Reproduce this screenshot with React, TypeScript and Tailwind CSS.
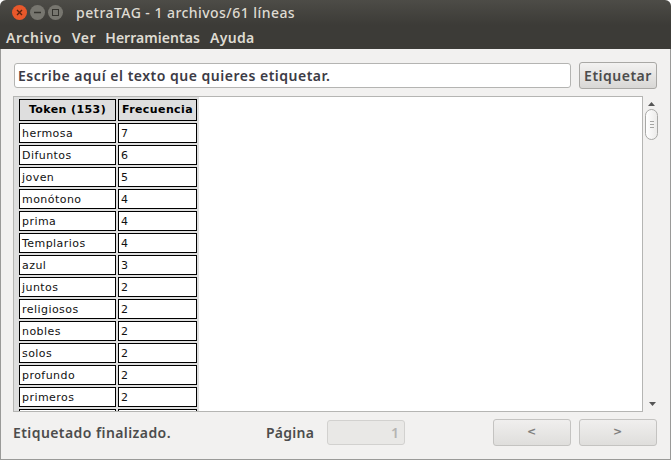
import React from 'react';

const rows: [string, string][] = [
  ['hermosa', '7'],
  ['Difuntos', '6'],
  ['joven', '5'],
  ['monótono', '4'],
  ['prima', '4'],
  ['Templarios', '4'],
  ['azul', '3'],
  ['juntos', '2'],
  ['religiosos', '2'],
  ['nobles', '2'],
  ['solos', '2'],
  ['profundo', '2'],
  ['primeros', '2'],
  ['', ''],
];

const ui = "font-['Noto_Sans','Open_Sans',sans-serif]";
const cell = "h-5 border border-black bg-white pl-[2px] text-[11px] leading-[19px] tracking-[0.45px] text-[#111] font-['DejaVu_Sans',sans-serif]";
const head = "h-[22px] border border-black bg-[#dedede] text-center text-[11px] leading-[19px] font-bold tracking-[0.4px] text-black font-['DejaVu_Sans',sans-serif]";

export default function App() {
  return (
    <div className={`flex h-[460px] w-[671px] flex-col overflow-hidden rounded-t-md bg-[#f2f1f0] ${ui}`}>
      {/* title bar */}
      <div className="flex h-[25px] items-center bg-gradient-to-b from-[#4d4c47] to-[#3c3b37] pl-3 text-[#dfdbd2]">
        <div className="flex items-center gap-[3px]">
          <div className="flex size-[15px] items-center justify-center rounded-full bg-[#e8582b] text-[#5a2410]">
            <svg width="7" height="7" viewBox="0 0 7 7" stroke="currentColor" strokeWidth="1.4"><path d="M1 1l5 5M6 1l-5 5" /></svg>
          </div>
          <div className="flex size-[15px] items-center justify-center rounded-full bg-[#77766f] text-[#35342f]">
            <svg width="7" height="7" viewBox="0 0 7 7" stroke="currentColor" strokeWidth="1.4"><path d="M0 3.5h7" /></svg>
          </div>
          <div className="flex size-[15px] items-center justify-center rounded-full bg-[#77766f] text-[#35342f]">
            <svg width="7" height="7" viewBox="0 0 7 7" fill="none" stroke="currentColor"><rect x="0.5" y="0.5" width="6" height="6" /></svg>
          </div>
        </div>
        <span className="ml-[13px] text-[14px] font-medium tracking-[0.45px]">petraTAG - 1 archivos/61 líneas</span>
      </div>

      {/* menu bar */}
      <div className="flex h-6 items-center bg-[#3c3b37] pl-[6px] text-[14px] font-semibold text-[#dfdbd2]">
        <span className="tracking-[0.6px]">Archivo</span>
        <span className="ml-[10px] tracking-[0.6px]">Ver</span>
        <span className="ml-[9px] tracking-[0.05px]">Herramientas</span>
        <span className="ml-[10px] tracking-[0.3px]">Ayuda</span>
      </div>

      {/* body */}
      <div className="flex min-h-0 flex-1 flex-col border-x border-b border-[#9a9a98] pl-[13px]">
        <div className="mt-[13px] flex items-center gap-2">
          <div className="flex h-[25px] w-[557px] items-center rounded-[3px] border border-[#b4b4b2] bg-white pl-[3px] text-[14px] font-semibold tracking-[0.5px] text-[#3c3b45]">
            Escribe aquí el texto que quieres etiquetar.
          </div>
          <div className="flex h-[27px] w-[78px] items-center justify-center rounded-[3px] border border-[#a9a8a5] bg-gradient-to-b from-[#f3f2f1] to-[#d8d7d5] text-[14px] font-semibold tracking-[0.5px] text-[#4c4c4c]">
            Etiquetar
          </div>
        </div>

        <div className="-ml-px mt-[7px] flex h-[316px] items-stretch">
          <div className="h-full w-[630px] overflow-hidden border border-[#b5b5b3] bg-white">
            <div className="w-[185px] bg-[#dedede] pl-[5px] pt-[2px]">
              <div className="grid grid-cols-[97px_79px] gap-x-[2px] gap-y-[2px]">
                <div className={head}>Token (153)</div>
                <div className={head}>Frecuencia</div>
                {rows.map(([token, freq], i) => (
                  <React.Fragment key={i}>
                    <div className={cell}>{token}</div>
                    <div className={cell}>{freq}</div>
                  </React.Fragment>
                ))}
              </div>
            </div>
          </div>

          {/* scrollbar */}
          <div className="relative flex-1">
            <svg className="absolute left-[5px] top-[6px]" width="7" height="4" viewBox="0 0 7 4"><path d="M3.5 0L7 4H0z" fill="#555" /></svg>
            <div className="absolute left-[2px] top-[13px] flex h-[31px] w-[13px] flex-col items-center justify-center gap-[2px] rounded-full border border-[#a8a8a6] bg-gradient-to-r from-white to-[#ecebea]">
              <div className="h-px w-1 bg-[#a5a5a3]" />
              <div className="h-px w-1 bg-[#a5a5a3]" />
              <div className="h-px w-1 bg-[#a5a5a3]" />
            </div>
            <svg className="absolute bottom-[6px] left-[6px]" width="7" height="4" viewBox="0 0 7 4"><path d="M0 0h7L3.5 4z" fill="#555" /></svg>
          </div>
        </div>

        <div className="-ml-px mt-[7px] flex items-center">
          <span className="w-[253px] text-[14px] font-semibold tracking-[0.42px] text-[#4c4c4c]">Etiquetado finalizado.</span>
          <span className="w-[61px] text-[14px] font-semibold tracking-[0.25px] text-[#4c4c4c]">Página</span>
          <div className="flex h-[25px] w-[78px] items-center justify-end rounded-[3px] border border-[#d2d1cf] bg-[#e9e8e6] pr-[5px] text-[14px] font-semibold text-[#b5b4b2]">1</div>
          <div className="ml-[88px] flex h-[27px] w-[78px] items-center justify-center rounded-[3px] border border-[#c4c3c1] bg-gradient-to-b from-[#f0efee] to-[#dfdedc] pr-px font-['DejaVu_Sans',sans-serif] text-[11px] font-bold text-[#7f7f7d]">&lt;</div>
          <div className="ml-2 flex h-[27px] w-[78px] items-center justify-center rounded-[3px] border border-[#c4c3c1] bg-gradient-to-b from-[#f0efee] to-[#dfdedc] pr-px font-['DejaVu_Sans',sans-serif] text-[11px] font-bold text-[#7f7f7d]">&gt;</div>
        </div>
      </div>
    </div>
  );
}
